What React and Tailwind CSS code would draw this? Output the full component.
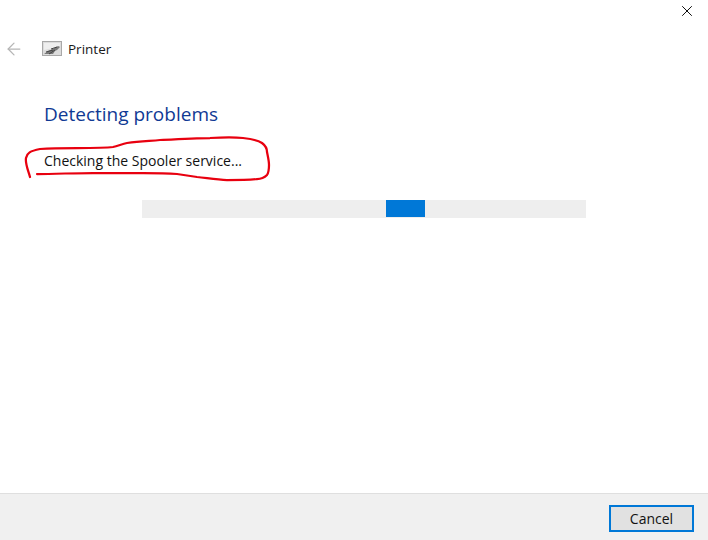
import React from 'react';
import { ArrowLeft, X } from 'lucide-react';

const PrinterIcon = () => (
  <svg width="20" height="16" viewBox="0 0 20 16" className="block">
    <rect x="0.5" y="0.5" width="19" height="14" fill="#dcdcdc" stroke="#a8a8a8" />
    <path d="M2 2h16v3l-6 2-10 2z" fill="#efefef" />
    <path d="M2 13l4-3 5-2 5-3 2 1-3 3-2 1-2 3z" fill="#7a7a7a" />
    <path d="M4 11l7-2M7 13l6-4M9 8l6-2" stroke="#444444" strokeWidth="1" fill="none" />
  </svg>
);

const Scribble = () => (
  <svg width="708" height="540" viewBox="0 0 708 540" className="absolute left-0 top-0 pointer-events-none">
    <path
      d="M30 177 C28 170 25 163 26 158 C27 153 30 151 40 149 C52 148 65 148 77 148 C92 148 105 148 113 147 C118 146 122 144 127 143 C140 141 150 141 160 140 C178 139 195 138 210 138 C225 137 235 137 243 138 C252 139 259 141 262 143 C266 146 267 149 267 152 C268 157 269 161 269 165 C269 169 269 172 267 175 C265 177 262 179 257 179 C247 180 237 180 227 180 C217 180 207 178 197 177 C190 176 184 175 177 174 C165 173 155 173 143 173 C125 173 110 173 93 173 C75 173 55 174 37 174"
      fill="none"
      stroke="#e8000f"
      strokeWidth="2.25"
      strokeLinecap="round"
    />
  </svg>
);

export default function App() {
  return (
    <div className="relative w-[708px] h-[540px] bg-white flex flex-col font-['Open_Sans','Noto_Sans',sans-serif] overflow-hidden">
      <div className="flex justify-end h-[24px] pt-[2px] pr-[12px]">
        <X size={18} strokeWidth={1.25} className="text-black" />
      </div>

      <div className="flex items-center h-[24px] mt-[13px]">
        <ArrowLeft size={20} strokeWidth={1.5} className="ml-[4px] text-[#b5b5b5]" />
        <div className="ml-[18px]"><PrinterIcon /></div>
        <span className="ml-[6px] text-[13.5px] text-[#1a1a1a]">Printer</span>
      </div>

      <div className="flex-1 pl-[44px] pt-[39px]">
        <h1 className="text-[19px] leading-[28px] text-[#103a94]">Detecting problems</h1>
        <p className="mt-[23px] text-[14px] leading-[20px] text-[#111111]">Checking the Spooler service...</p>
        <div className="mt-[29px] ml-[98px] w-[444px] h-[18px] bg-[#eeeeee] flex items-start pl-[244px]">
          <div className="w-[39px] h-[17px] bg-[#0078d7]" />
        </div>
      </div>

      <div className="h-[47px] bg-[#f0f0f0] border-t border-[#dfdfdf] flex items-center justify-end pr-[14px] pt-[2px]">
        <button className="w-[85px] h-[27px] bg-[#e1e1e1] border-2 border-[#0078d7] text-[14px] text-[#111111] flex items-center justify-center">
          Cancel
        </button>
      </div>

      <Scribble />
    </div>
  );
}
